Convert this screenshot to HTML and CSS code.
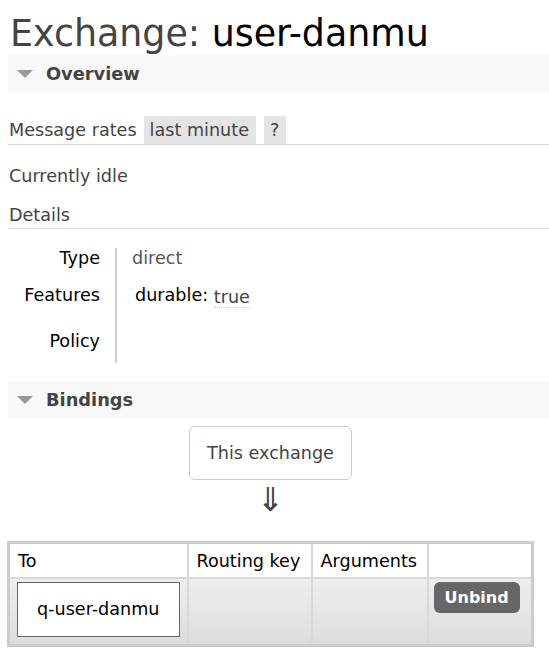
FILE: index.html
```html
<!DOCTYPE html>
<html>
<head>
<meta charset="utf-8">
<link rel="stylesheet" href="styles.css">
<title>Exchange: user-danmu</title>
</head>
<body>
<div class="page">
  <h1 class="title"><span class="title-kind">Exchange:</span> <span class="title-name">user-danmu</span></h1>

  <div class="section">
    <h2 class="section-head"><span class="tri"></span>Overview</h2>
    <div class="section-body">
      <div class="rates-bar">
        <span class="rates-label">Message rates</span>
        <span class="pill">last minute</span>
        <span class="pill">?</span>
      </div>
      <p class="idle">Currently idle</p>
      <h3 class="sub">Details</h3>
      <table class="facts">
        <tr class="row-type"><th>Type</th><td>direct</td></tr>
        <tr class="row-features"><th>Features</th><td><span class="feat-key">durable:</span> <abbr class="feat-val">true</abbr></td></tr>
        <tr class="row-policy"><th>Policy</th><td></td></tr>
      </table>
    </div>
  </div>

  <div class="section">
    <h2 class="section-head"><span class="tri"></span>Bindings</h2>
    <div class="bindings">
      <div class="bindings-wrap">
        <div class="this-exchange">This exchange</div>
        <div class="arrow">&#8659;</div>
        <table class="list">
          <thead>
            <tr><th class="c-to">To</th><th class="c-key">Routing key</th><th class="c-args">Arguments</th><th class="c-act"></th></tr>
          </thead>
          <tbody>
            <tr>
              <td class="c-to"><span class="queue">q-user-danmu</span></td>
              <td></td>
              <td></td>
              <td class="c-act"><button class="unbind">Unbind</button></td>
            </tr>
          </tbody>
        </table>
      </div>
    </div>
  </div>
</div>
</body>
</html>
```
FILE: styles.css
```css
html, body {
  margin: 0;
  padding: 0;
  background: #fff;
}
body {
  font-family: "DejaVu Sans", Verdana, sans-serif;
  font-size: 17.6px;
  color: #444;
}
.page {
  padding-left: 8px;
}
.title {
  margin: 13px 0 0 2px;
  font-size: 36.4px;
  line-height: 42px;
  font-weight: normal;
}
.title-kind { color: #444; }
.title-name { color: #000; }

.section-head {
  margin: 0;
  height: 37px;
  display: flex;
  align-items: center;
  background: #f8f8f8;
  font-size: 17.8px;
  font-weight: bold;
  color: #444;
  padding-left: 9px;
}
.tri {
  width: 0;
  height: 0;
  border-left: 8px solid transparent;
  border-right: 8px solid transparent;
  border-top: 8px solid #999;
  margin-right: 13px;
}
.section-body {
  padding-top: 24px;
}
.rates-bar {
  display: flex;
  align-items: center;
  gap: 7px;
  border-bottom: 1px solid #ddd;
  padding-bottom: 0;
}
.rates-label {
  padding-left: 1px;
}
.pill {
  background: #e4e4e4;
  padding: 0 7px 0 6px;
  line-height: 28px;
}
.pill + .pill {
  margin-left: 1px;
}
.idle {
  margin: 21px 0 0 1px;
  line-height: 21px;
}
.sub {
  margin: 18px 0 0 0;
  padding-left: 1px;
  font-size: 17.6px;
  font-weight: normal;
  line-height: 21px;
  border-bottom: 1px solid #ddd;
  padding-bottom: 2px;
  color: #444;
}
.facts {
  margin-top: 19px;
  border-collapse: collapse;
}
.facts th {
  text-align: right;
  font-weight: normal;
  color: #000;
  width: 92px;
  padding: 0 15px 0 0;
  border-right: 2px solid #ccc;
  vertical-align: top;
  line-height: 21px;
}
.facts td {
  padding: 0 0 0 15px;
  vertical-align: top;
  line-height: 21px;
  color: #555;
}
.row-type th, .row-type td { padding-bottom: 16px; }
.row-features th, .row-features td { padding-bottom: 25px; }
.row-features td { padding-left: 18px; }
.row-policy th, .row-policy td { padding-bottom: 11px; }
.feat-key { color: #000; }
.feat-val {
  color: #444;
  text-decoration: none;
  border-bottom: 1px dotted #ccc;
  position: relative;
  top: 2px;
}

.section + .section {
  margin-top: 18px;
}
.bindings-wrap {
  width: 525px;
  display: flex;
  flex-direction: column;
  align-items: center;
  padding-top: 8px;
}
.this-exchange {
  border: 1px solid #ccc;
  border-radius: 6px;
  padding: 0 17px;
  line-height: 52px;
  color: #444;
}
.arrow {
  font-size: 33px;
  line-height: 38px;
  color: #444;
  margin-top: 1px;
}
.list {
  margin-top: 22px;
  width: 524px;
  table-layout: fixed;
  border-collapse: collapse;
  border: 3px solid #ccc;
}
.list th, .list td {
  border: 2px solid #d8d8d8;
  box-sizing: border-box;
}
.list th {
  font-weight: normal;
  color: #000;
  text-align: left;
  padding: 2px 8px 0;
  height: 35px;
  white-space: nowrap;
}
.list .c-to { width: 179px; }
.list .c-key { width: 124px; }
.list .c-args { width: 116px; }
.list .c-act { width: 105px; }
.list tbody tr {
  background: linear-gradient(#eeeeee, #dcdcdc);
}
.list td {
  vertical-align: top;
  padding: 3px 7px 7px;
  height: 55px;
}
.list td.c-act {
  padding-left: 5px;
}
.queue {
  display: block;
  background: #fff;
  border: 1px solid #666;
  color: #000;
  text-align: center;
  padding: 0;
  line-height: 53px;
  white-space: nowrap;
}
.unbind {
  font-family: "DejaVu Sans", Verdana, sans-serif;
  font-size: 16px;
  font-weight: bold;
  color: #fff;
  background: #666;
  border: none;
  border-radius: 6px;
  padding: 0 11px;
  height: 31px;
  line-height: 31px;
}
```
